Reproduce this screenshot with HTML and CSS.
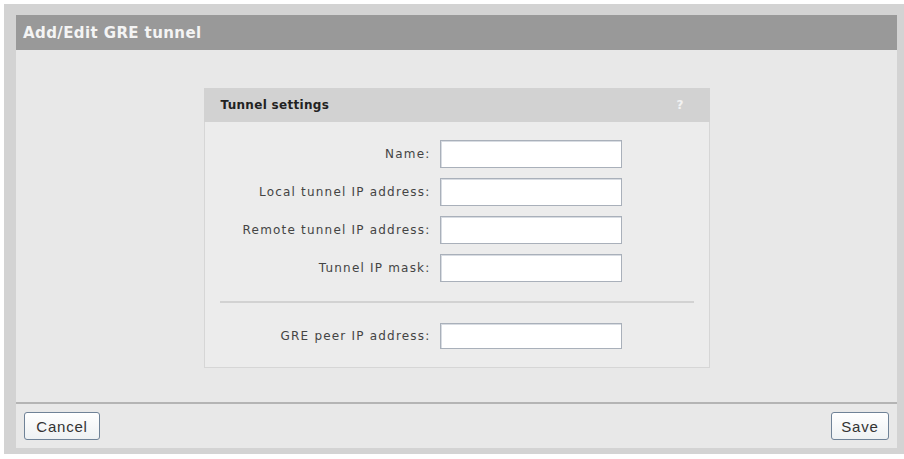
FILE: index.html
```html
<!DOCTYPE html>
<html lang="en">
<head>
<meta charset="utf-8">
<title>Add/Edit GRE tunnel</title>
<link rel="stylesheet" href="styles.css">
</head>
<body>
<div class="frame">
  <div class="window">
    <div class="title-bar">Add/Edit GRE tunnel</div>
    <div class="content">
      <div class="panel">
        <div class="panel-head">
          <span class="panel-title">Tunnel settings</span>
          <span class="help">?</span>
        </div>
        <div class="panel-body">
          <div class="row"><label class="lbl">Name:</label><input class="field" type="text"></div>
          <div class="row"><label class="lbl">Local tunnel IP address:</label><input class="field" type="text"></div>
          <div class="row"><label class="lbl">Remote tunnel IP address:</label><input class="field" type="text"></div>
          <div class="row"><label class="lbl">Tunnel IP mask:</label><input class="field" type="text"></div>
          <div class="sep"></div>
          <div class="row row-short"><label class="lbl">GRE peer IP address:</label><input class="field" type="text"></div>
        </div>
      </div>
    </div>
    <div class="footer">
      <button class="btn btn-cancel" type="button">Cancel</button>
      <button class="btn btn-save" type="button">Save</button>
    </div>
  </div>
</div>
</body>
</html>
```

FILE: styles.css
```css
html, body {
  margin: 0;
  padding: 0;
  background: #ffffff;
}

.frame {
  margin: 4px 0 4px 4px;
  padding: 11px 7px 6px 12px;
  background: #d3d3d3;
}

.window {
  display: flex;
  flex-direction: column;
  background: #e8e8e8;
}

.title-bar {
  height: 35px;
  box-sizing: border-box;
  padding: 0 0 0 7px;
  display: flex;
  align-items: center;
  background: #999999;
  color: #f4f4f4;
  font-family: "DejaVu Sans", Verdana, sans-serif;
  font-weight: bold;
  font-size: 15px;
  letter-spacing: 0.4px;
}

.content {
  height: 354px;
  box-sizing: border-box;
  padding-top: 38px;
  display: flex;
  justify-content: center;
  align-items: flex-start;
  border-bottom: 2px solid #b4b4b4;
}

.panel {
  width: 506px;
  height: 280px;
  box-sizing: border-box;
  background: #ececec;
  border: 1px solid #d6d6d6;
  border-top: none;
  display: flex;
  flex-direction: column;
}

.panel-head {
  height: 34px;
  box-sizing: border-box;
  padding: 0 26px 0 17px;
  margin: 0 -1px;
  display: flex;
  align-items: center;
  justify-content: space-between;
  background: #d2d2d2;
  font-family: "DejaVu Sans", Verdana, sans-serif;
}

.panel-title {
  font-weight: bold;
  font-size: 12px;
  color: #222222;
  letter-spacing: 0.3px;
}

.help {
  font-weight: bold;
  font-size: 12px;
  color: #f2f2f2;
}

.panel-body {
  padding: 18px 14px 0 14px;
  display: flex;
  flex-direction: column;
  gap: 10px;
}

.row {
  display: flex;
  align-items: center;
  gap: 9px;
  height: 28px;
}

.row-short {
  height: 26px;
}

.lbl {
  width: 212px;
  text-align: right;
  font-family: "DejaVu Sans", Verdana, sans-serif;
  font-size: 12px;
  letter-spacing: 1.2px;
  color: #444444;
}

.field {
  width: 182px;
  height: 28px;
  box-sizing: border-box;
  margin: 0;
  padding: 2px 4px;
  border: 1px solid #a9b0ba;
  box-shadow: inset 1px 1px 0 #d8dce2;
  background: #ffffff;
  font-size: 12px;
}

.row-short .field {
  height: 26px;
}

.sep {
  height: 2px;
  margin: 9px 1px 10px 1px;
  background: #d2d2d2;
}

.footer {
  height: 44px;
  box-sizing: border-box;
  padding: 8px 8px 0 8px;
  display: flex;
  justify-content: space-between;
  align-items: flex-start;
}

.btn {
  height: 28px;
  box-sizing: border-box;
  padding: 0 6px;
  border: 1px solid #6f8297;
  border-radius: 3px;
  background: linear-gradient(#ffffff, #eef1f3);
  color: #333333;
  font-family: "Liberation Sans", Arial, sans-serif;
  font-size: 15px;
  letter-spacing: 0.8px;
}

.btn-cancel {
  width: 76px;
}

.btn-save {
  width: 58px;
}
```
